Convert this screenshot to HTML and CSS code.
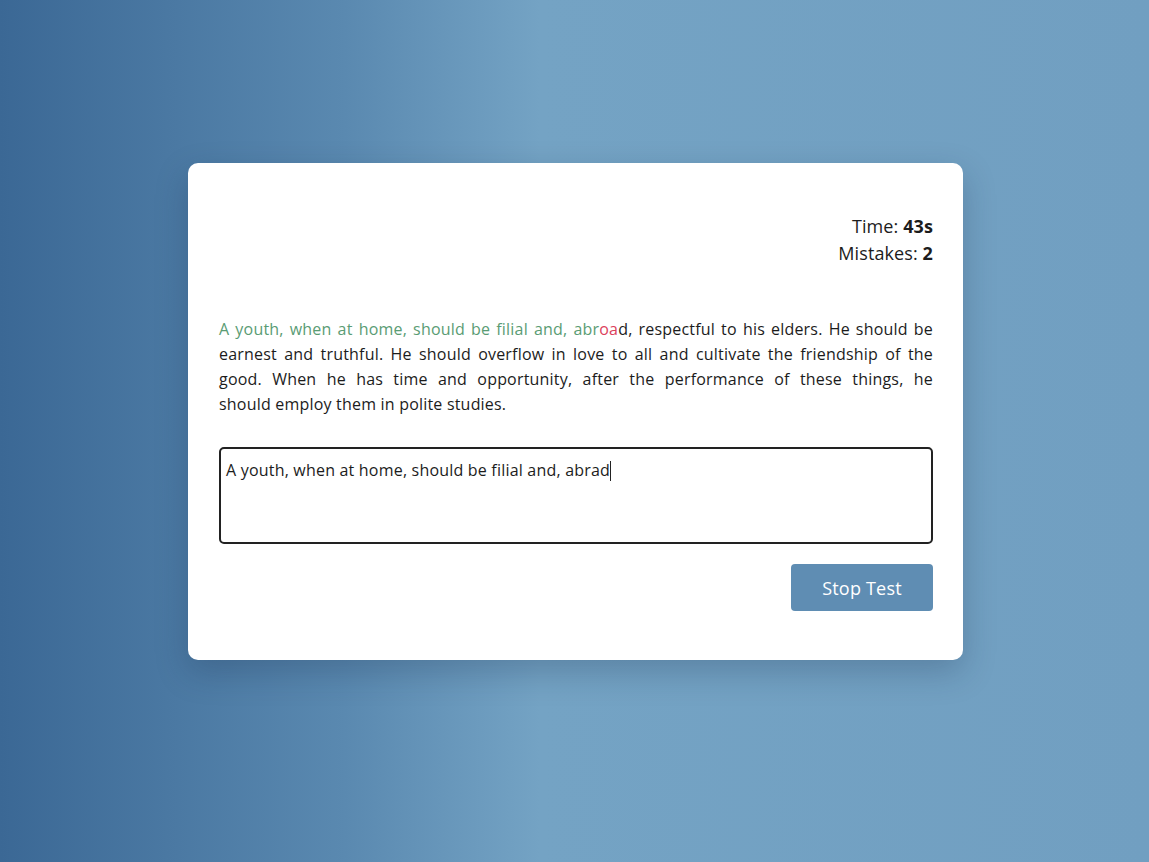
FILE: index.html
```html
<!DOCTYPE html>
<html lang="en">
<head>
<meta charset="utf-8">
<title>Typing Test</title>
<link rel="stylesheet" href="styles.css">
</head>
<body>
<main class="card">
  <div class="stats">
    <div>Time: <b>43s</b></div>
    <div>Mistakes: <b>2</b></div>
  </div>
  <p class="quote">
    <span class="line"><span class="ok">A youth, when at home, should be filial and, abr</span><span class="bad">oa</span>d, respectful to his elders. He should be</span>
    <span class="line">earnest and truthful. He should overflow in love to all and cultivate the friendship of the</span>
    <span class="line">good. When he has time and opportunity, after the performance of these things, he</span>
    <span class="line last">should employ them in polite studies.</span>
  </p>
  <div class="input">A youth, when at home, should be filial and, abrad<span class="caret"></span></div>
  <div class="actions">
    <button class="btn">Stop Test</button>
  </div>
</main>
</body>
</html>
```

FILE: styles.css
```css
html, body {
  margin: 0;
  padding: 0;
}
body {
  min-height: 100vh;
  background: linear-gradient(to right, #3b6895 0%, #5a89b0 30%, #74a3c4 47%, #719fc1 100%);
  font-family: "Open Sans", "Liberation Sans", sans-serif;
  color: #1c1c1c;
  padding: 163px 0 0 2px;
  box-sizing: border-box;
}
.card {
  width: 775px;
  margin: 0 auto;
  box-sizing: border-box;
  background: #fff;
  border-radius: 10px;
  padding: 30px 30px 30px 31px;
  box-shadow: 0 12px 32px rgba(20, 40, 70, 0.25);
}
.stats {
  text-align: right;
  font-size: 18px;
  line-height: 27px;
  margin: 20px 0 50px;
  letter-spacing: 0.1px;
}
.stats b {
  font-weight: 700;
}
.quote {
  margin: 0 0 30px;
  font-size: 16px;
  line-height: 25px;
  letter-spacing: 0.2px;
}
.line {
  display: block;
  text-align: justify;
  text-align-last: justify;
  white-space: nowrap;
}
.line.last {
  text-align-last: left;
}
.ok { color: #5a9c74; }
.bad { color: #dc3f5c; }
.input {
  height: 97px;
  box-sizing: border-box;
  border: 2px solid #222;
  border-radius: 5px;
  padding: 10px 5px;
  font-size: 16px;
  line-height: 22px;
  letter-spacing: 0.2px;
}
.caret {
  display: inline-block;
  width: 1px;
  height: 20px;
  background: #222;
  vertical-align: -5px;
}
.actions {
  display: flex;
  justify-content: flex-end;
  margin: 20px 0 19px;
}
.btn {
  width: 142px;
  height: 47px;
  border: none;
  border-radius: 4px;
  background: #5f8db3;
  color: #fff;
  font-family: inherit;
  font-size: 18px;
  letter-spacing: 0.2px;
  cursor: pointer;
}
```
